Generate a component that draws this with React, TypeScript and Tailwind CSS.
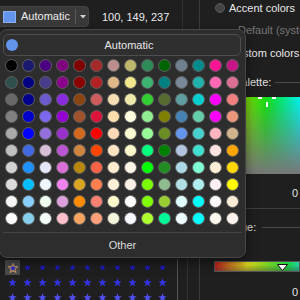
import React from 'react';

// colour palette, 14 columns x 10 rows
const PALETTE: string[][] = [
  ['#000000', '#191970', '#4B0082', '#800080', '#800000', '#A52A2A', '#BC8F8F', '#BDB76B', '#2E8B57', '#006400', '#708090', '#008B8B', '#FF1493', '#C71585'],
  ['#2F4F4F', '#000080', '#483D8B', '#8B008B', '#8B0000', '#B22222', '#DEB887', '#F0E68C', '#3CB371', '#008080', '#778899', '#20B2AA', '#FF69B4', '#DB7093'],
  ['#696969', '#00008B', '#6A5ACD', '#8A2BE2', '#8B4513', '#CD5C5C', '#F5DEB3', '#EEE8AA', '#32CD32', '#556B2F', '#5F9EA0', '#00CED1', '#FF00FF', '#F08080'],
  ['#808080', '#0000CD', '#7B68EE', '#9400D3', '#A0522D', '#DC143C', '#FFDEAD', '#FFFFE0', '#90EE90', '#808000', '#4682B4', '#66CDAA', '#FF00FF', '#E9967A'],
  ['#A9A9A9', '#0000FF', '#9370DB', '#9932CC', '#D2691E', '#FF0000', '#FFDAB9', '#FAFAD2', '#98FB98', '#6B8E23', '#6495ED', '#48D1CC', '#FFB6C1', '#D2B48C'],
  ['#C0C0C0', '#4169E1', '#D8BFD8', '#BA55D3', '#CD853F', '#FF4500', '#FFE4C4', '#FFFACD', '#00FF7F', '#008000', '#B0C4DE', '#40E0D0', '#FFE4E1', '#FFA500'],
  ['#D3D3D3', '#1E90FF', '#E6E6FA', '#DA70D6', '#B8860B', '#FF6347', '#FFEBCD', '#FDF5E6', '#00FF00', '#228B22', '#ADD8E6', '#7FFFD4', '#FFEFD5', '#FFD700'],
  ['#DCDCDC', '#00BFFF', '#F0F8FF', '#EE82EE', '#DAA520', '#FF7F50', '#FFEFD5', '#FAF0E6', '#7CFC00', '#8FBC8F', '#B0E0E6', '#AFEEEE', '#FFF0F5', '#FFFF00'],
  ['#F5F5F5', '#87CEFA', '#F0FFF0', '#DDA0DD', '#FF8C00', '#FA8072', '#FFFACD', '#FFFFFF', '#7FFF00', '#9ACD32', '#E0FFFF', '#00FFFF', '#FFFAFA', '#FAEBD7'],
  ['#FFFFFF', '#87CEEB', '#F5FFFA', '#FFC0CB', '#F4A460', '#FFA07A', '#F5F5DC', '#F8F8FF', '#ADFF2F', '#00FA9A', '#F0FFFF', '#00FFFF', '#FFFAF0', '#FFF5EE'],
];

const STAR_ROWS = ['#1c1cc8', '#3434e6', '#5050f5'];

function Star({ fill, stroke, size = 8 }: { fill: string; stroke?: string; size?: number }) {
  return (
    <svg width={size} height={size} viewBox="0 0 10 10">
      <polygon
        points="5,0.4 6.2,3.7 9.7,3.7 6.9,5.9 7.9,9.4 5,7.3 2.1,9.4 3.1,5.9 0.3,3.7 3.8,3.7"
        fill={fill}
        stroke={stroke}
        strokeWidth={stroke ? 1.2 : 0}
        strokeLinejoin="round"
      />
    </svg>
  );
}

function ColorPopup() {
  return (
    <div className="absolute left-[-1px] top-[29px] flex h-[229px] w-[247px] flex-col rounded-[8px] border border-[#464646] bg-[#2d2d2d] shadow-[0_4px_12px_rgba(0,0,0,0.5)]">
      {/* automatic row */}
      <div className="ml-[3px] mt-[4px] flex h-[22px] w-[238px] items-center rounded-[5px] border border-[#4e4e4e] bg-[#2f2f2f] pl-[2px]">
        <div className="h-[12px] w-[12px] rounded-full bg-[#6495ED]" />
        <div className="flex-1 text-center text-[11px] text-[#e6e6e6]">Automatic</div>
      </div>

      {/* swatches */}
      <div className="ml-[3px] mt-[1px] grid grid-cols-[repeat(14,17px)] grid-rows-[repeat(10,17px)]">
        {PALETTE.flat().map((c, i) => (
          <div key={i} className="flex items-center justify-center">
            <div className="h-[13px] w-[13px] rounded-full border border-[#5e5e5e]" style={{ backgroundColor: c }} />
          </div>
        ))}
      </div>

      <div className="mx-[3px] mt-[5px] h-px bg-[#444444]" />
      <div className="flex flex-1 items-center justify-center text-[11px] text-[#dcdcdc]">Other</div>
    </div>
  );
}

function RightPanel() {
  return (
    <div className="flex min-w-0 flex-1 flex-col whitespace-nowrap text-[11px]">
      <div className="flex h-[16px] items-center pl-[15px]">
        <div className="h-[10px] w-[10px] rounded-full border border-[#5a5a5a] bg-[#444444]" />
        <span className="ml-[4px] text-[#e8e8e8]">Accent colors</span>
      </div>
      <div className="mt-[6px] flex h-[16px] items-center pl-[35px]">
        <div className="h-[10px] w-[10px] rounded-[2px] bg-[#3a3a3a]" />
        <span className="ml-[3px] text-[#777777]">Default (system)</span>
      </div>
      <div className="mt-[7px] flex h-[16px] items-center pl-[15px]">
        <div className="h-[10px] w-[10px] rounded-full border border-[#5a5a5a] bg-[#444444]" />
        <span className="ml-[4px] text-[#e8e8e8]">Custom colors</span>
      </div>

      <div className="mt-[13px] flex h-[16px] items-center pl-[34px]">
        <span className="text-[#e0e0e0]">Palette:</span>
        <div className="ml-[4px] h-px flex-1 bg-[#4a4a4a]" />
      </div>

      {/* saturation / hue field */}
      <div className="relative ml-[14px] mt-[7px] h-[81px] bg-[linear-gradient(to_right,#e07000_0%,#c8e000_20%,#88e000_36%,#10e010_60%,#00e880_80%,#00f0f0_100%)]">
        <div className="absolute inset-0 bg-[linear-gradient(to_bottom,rgba(128,128,128,0)_0%,rgba(120,120,120,0.55)_55%,#777777_100%)]" />
        <div className="absolute left-[44px] top-0 h-[2px] w-[4px] bg-white" />
        <div className="absolute left-[58px] top-0 h-[2px] w-[4px] bg-white" />
        <div className="absolute left-[52px] top-[5px] h-[5px] w-[2px] bg-white" />
      </div>

      <div className="mt-[11px] h-[16px] pr-[2px] text-right leading-[16px] text-[#e0e0e0]">0</div>
      <div className="ml-[14px] mt-[7px] h-px bg-[#3e3e3e]" />

      <div className="mt-[11px] flex h-[16px] items-center pl-[33px]">
        <span className="text-[#e0e0e0]">Hue:</span>
        <div className="ml-[6px] h-px flex-1 bg-[#4a4a4a]" />
      </div>

      {/* hue bar */}
      <div className="relative ml-[14px] mt-[25px] h-[12px] border border-[#555555] bg-[linear-gradient(to_right,#c81e1e_0%,#d88a1e_20%,#d8d21e_38%,#8cd21e_58%,#1ed23c_86%,#1ed2a0_100%)]">
        <div className="absolute inset-0 bg-[linear-gradient(to_bottom,rgba(0,0,0,0)_30%,rgba(60,60,60,0.45)_100%)]" />
        <svg className="absolute left-[62px] top-[2px]" width="11" height="7" viewBox="0 0 11 7">
          <polygon points="0.5,0.5 10.5,0.5 5.5,6.5" fill="#ffffff" stroke="#111111" strokeWidth="1" />
        </svg>
      </div>

      <div className="mt-[12px] h-[16px] pr-[2px] text-right leading-[16px] text-[#e0e0e0]">0</div>
    </div>
  );
}

export default function App() {
  return (
    <div className="relative h-[300px] w-[300px] overflow-hidden bg-[#1f1f1f] font-['Liberation_Sans',Arial,sans-serif]">
      <div className="flex h-full">
        {/* left side */}
        <div className="flex w-[200px] shrink-0 flex-col border-r border-[#3c3c3c]">
          <div className="flex h-[29px] shrink-0">
            <div className="flex w-[183px] items-start border-r border-[#333333] pt-[6px]">
              <div className="ml-[-4px] flex h-[21px] w-[93px] items-center rounded-[4px] border border-[#454545] bg-[#3a3a3a] pl-[6px]">
                <div className="h-[12px] w-[13px] border border-[#8fb0f0] bg-[#6495ED]" />
                <span className="ml-[5px] text-[11px] text-[#ececec]">Automatic</span>
                <div className="ml-[5px] h-[15px] w-px bg-[#5a5a5a]" />
                <svg className="ml-[4px]" width="6" height="4" viewBox="0 0 6 4">
                  <polygon points="0,0 6,0 3,3.5" fill="#d0d0d0" />
                </svg>
              </div>
              <span className="ml-[13px] mt-[3px] whitespace-nowrap text-[11px] text-[#ececec]">100, 149, 237</span>
            </div>
          </div>

          <div className="h-[230px] shrink-0" />

          {/* marker list */}
          <div className="flex flex-1">
            <div className="w-[178px] border-r border-[#555555] pl-[5px] pt-[1px]">
              <div className="grid grid-cols-[repeat(11,15px)] grid-rows-[repeat(3,15px)]">
                {STAR_ROWS.flatMap((c, r) =>
                  Array.from({ length: 11 }).map((_, i) => (
                    <div key={`${r}-${i}`} className="flex items-center justify-center">
                      {r === 0 && i === 0 ? (
                        <div className="flex h-[15px] w-[15px] items-center justify-center bg-[#4a4a4a]">
                          <Star fill="#2020d0" stroke="#b08a60" size={10} />
                        </div>
                      ) : (
                        <Star fill={c} size={r === 0 ? 7 : 9} />
                      )}
                    </div>
                  ))
                )}
              </div>
            </div>
            <div className="w-[10px] border-r border-[#333333]" />
          </div>
        </div>

        <RightPanel />
      </div>

      <ColorPopup />
    </div>
  );
}
